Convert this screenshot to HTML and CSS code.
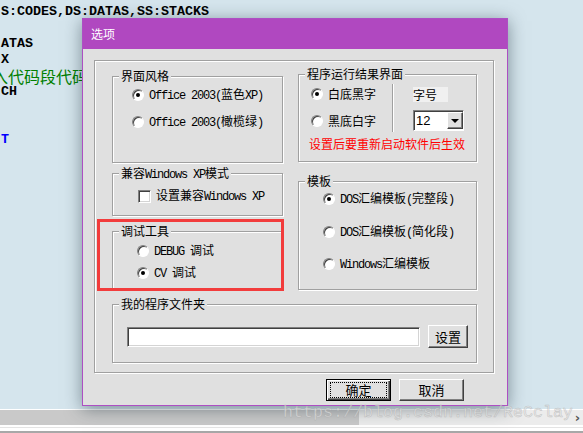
FILE: index.html
```html
<!DOCTYPE html>
<html lang="zh-CN">
<head>
  <meta charset="UTF-8">
  <title>选项</title>
  <link rel="stylesheet" href="styles.css">
</head>
<body>
  <div class="editor">
    <div class="code">
      <div class="line">S:CODES,DS:DATAS,SS:STACKS</div>
      <div class="line">&nbsp;</div>
      <div class="line">ATAS</div>
      <div class="line">X</div>
      <div class="line comment">入代码段代码</div>
      <div class="line">CH</div>
      <div class="line">&nbsp;</div>
      <div class="line">&nbsp;</div>
      <div class="line kw">T</div>
    </div>
  </div>
  <div class="statusbar">
    <div class="tabs"></div>
    <div class="tail"><span class="more">›</span></div>
  </div>

  <div class="dialog">
    <div class="titlebar">选项</div>
    <div class="dlg-body">
      <div class="frame">
        <div class="cols">
          <div class="col col-left">
            <div class="group g-style">
              <div class="gtitle">界面风格</div>
              <div class="opt"><span class="radio on"></span><span class="lbl"><span class="en">Office 2003(</span>蓝色<span class="en">XP)</span></span></div>
              <div class="opt"><span class="radio"></span><span class="lbl"><span class="en">Office 2003(</span>橄榄绿<span class="en">)</span></span></div>
            </div>
            <div class="group g-compat">
              <div class="gtitle">兼容<span class="en">Windows XP</span>模式</div>
              <div class="opt"><span class="check"></span><span class="lbl">设置兼容<span class="en">Windows XP</span></span></div>
            </div>
            <div class="group g-debug">
              <div class="gtitle">调试工具</div>
              <div class="opt"><span class="radio"></span><span class="lbl"><span class="en">DEBUG </span>调试</span></div>
              <div class="opt"><span class="radio on"></span><span class="lbl"><span class="en">CV </span>调试</span></div>
            </div>
          </div>

          <div class="col col-right">
            <div class="group g-run">
              <div class="gtitle">程序运行结果界面</div>
              <div class="run-top">
                <div class="run-radios">
                  <div class="opt"><span class="radio on"></span><span class="lbl">白底黑字</span></div>
                  <div class="opt"><span class="radio"></span><span class="lbl">黑底白字</span></div>
                </div>
                <div class="vsep"></div>
                <div class="font-col">
                  <div class="font-label">字号</div>
                  <div class="select">
                    <span class="select-val">12</span>
                    <span class="select-btn"><span class="tri"></span></span>
                  </div>
                </div>
              </div>
              <div class="warn">设置后要重新启动软件后生效</div>
            </div>
            <div class="group g-tpl">
              <div class="gtitle">模板</div>
              <div class="opt"><span class="radio on"></span><span class="lbl"><span class="en">DOS</span>汇编模板<span class="en">(</span>完整段<span class="en">)</span></span></div>
              <div class="opt"><span class="radio"></span><span class="lbl"><span class="en">DOS</span>汇编模板<span class="en">(</span>简化段<span class="en">)</span></span></div>
              <div class="opt"><span class="radio"></span><span class="lbl"><span class="en">Windows</span>汇编模板</span></div>
            </div>
          </div>
        </div>

        <div class="group g-folder">
          <div class="gtitle">我的程序文件夹</div>
          <div class="folder-row">
            <div class="textbox"></div>
            <div class="btn btn-small">设置</div>
          </div>
        </div>
      </div>

      <div class="actions">
        <div class="btn btn-default"><span class="focus">确定</span></div>
        <div class="btn">取消</div>
      </div>
    </div>
  </div>

  <div class="annot"></div>
  <div class="mark">https://blog.csdn.net/ReCclay</div>
</body>
</html>
```

FILE: styles.css
```css
html, body {
  margin: 0;
  padding: 0;
}

body {
  width: 583px;
  height: 433px;
  overflow: hidden;
  position: relative;
  display: flex;
  flex-direction: column;
  background: #d5e5ed;
  font-family: "Noto Sans CJK SC", sans-serif;
}

/* editor behind the dialog */
.editor {
  flex: 1;
  min-height: 0;
  overflow: hidden;
}

.code {
  padding: 4px 0 0 1px;
  font-family: "Liberation Mono", "Noto Sans CJK SC", monospace;
  font-weight: bold;
  font-size: 13.33px;
  line-height: 16px;
  color: #000;
}

.line {
  height: 16px;
  white-space: nowrap;
}

.code .comment {
  font-family: "Noto Sans CJK SC", sans-serif;
  font-weight: normal;
  font-size: 16px;
  line-height: 16px;
  color: #008000;
  margin-left: -9px;
}

.code .kw { color: #0000ff; }

.statusbar {
  flex: none;
  height: 24px;
  display: flex;
  align-items: flex-start;
  background: linear-gradient(to bottom, #fff 0 1px, #ececec 1px 16px, #fff 16px 18px, #e4e4e4 18px 19px, #fff 19px 22px, #a8a8a8 22px 24px);
}

.tabs {
  width: 359px;
  height: 15px;
  margin-top: 1px;
  background: #c9c9c9;
}

.tail {
  flex: 1;
  height: 15px;
  margin-top: 1px;
  display: flex;
  justify-content: flex-end;
  align-items: center;
  padding-right: 3px;
}

.more {
  font-family: "DejaVu Sans", sans-serif;
  font-weight: bold;
  font-size: 13px;
  line-height: 15px;
  color: #555;
}

/* dialog window */
.dialog {
  position: absolute;
  left: 82px;
  top: 18px;
  width: 426px;
  height: 388px;
  box-sizing: border-box;
  border: 1px solid #ad4fc3;
  background: #e0e0e0;
  box-shadow: 0 3px 16px rgba(30, 50, 60, 0.5);
  font-size: 12px;
  line-height: 14px;
  color: #000;
}

.titlebar {
  height: 30px;
  line-height: 30px;
  padding-left: 8px;
  background: #b048c0;
  color: #fff;
}

.dlg-body {
  padding: 11px 0 0 11px;
}

.en {
  font-family: "Liberation Mono", monospace;
  letter-spacing: -1.2px;
}

.frame {
  width: 400px;
  height: 313px;
  box-sizing: border-box;
  border: 1px solid #a0a0a0;
  box-shadow: 1px 1px 0 #fff, inset 1px 1px 0 #fff;
  padding: 0 16px 0 17px;
}

.cols {
  display: flex;
  gap: 15px;
}

.col {
  display: flex;
  flex-direction: column;
}

.col-left { width: 171px; padding-top: 15px; }
.col-right { width: 179px; padding-top: 13px; }

.group {
  display: flex;
  flex-direction: column;
  box-sizing: border-box;
  border: 1px solid #a0a0a0;
  box-shadow: 1px 1px 0 #fff, inset 1px 1px 0 #fff;
}

.gtitle {
  align-self: flex-start;
  height: 14px;
  line-height: 14px;
  margin: -8px 0 -6px 6px;
  padding: 0 2px;
  background: #e0e0e0;
  white-space: nowrap;
}

.opt {
  display: flex;
  align-items: center;
  height: 20px;
  white-space: nowrap;
}

.lbl {
  white-space: pre;
}

.radio {
  width: 12px;
  height: 12px;
  box-sizing: border-box;
  margin-right: 5px;
  border-radius: 50%;
  border: 1px solid;
  border-color: #808080 #fff #fff #808080;
  box-shadow: inset 1px 1px 0 #404040;
  background: #fff;
  display: flex;
  align-items: center;
  justify-content: center;
}

.radio.on::after {
  content: "";
  width: 4px;
  height: 4px;
  border-radius: 50%;
  background: #000;
}

.check {
  width: 13px;
  height: 13px;
  box-sizing: border-box;
  margin-right: 5px;
  border: 1px solid;
  border-color: #808080 #fff #fff #808080;
  box-shadow: inset 1px 1px 0 #404040, inset -1px -1px 0 #d4d4d4;
  background: #fff;
}

/* left groups */
.g-style { height: 87px; }
.g-style .opt { margin: 7px 0 0 19px; }
.g-style .opt:nth-child(2) { margin-top: 8px; }

.g-compat { height: 43px; margin-top: 10px; }
.g-compat .opt { margin: 12px 0 0 25px; }

.g-debug { height: 59px; margin-top: 15px; }
.g-debug .opt { margin: 2px 0 0 24px; }
.g-debug .opt:nth-child(2) { margin-top: 9px; }

/* right groups */
.g-run { height: 88px; }

.run-top {
  display: flex;
  margin-top: 9px;
}

.run-radios {
  width: 81px;
  margin-left: 12px;
}

.run-radios .opt + .opt { margin-top: 7px; }

.vsep {
  width: 0;
  height: 48px;
  border-left: 1px solid #a0a0a0;
  border-right: 1px solid #fff;
}

.font-col {
  margin-left: 19px;
}

.font-label {
  width: 35px;
  height: 15px;
  line-height: 15px;
  margin-top: 3px;
  background: #f0f0f0;
}

.select {
  display: flex;
  width: 51px;
  height: 21px;
  margin-top: 8px;
  box-sizing: border-box;
  border: 1px solid;
  border-color: #808080 #fff #fff #808080;
  box-shadow: inset 1px 1px 0 #404040;
  background: #fff;
}

.select-val {
  flex: 1;
  padding: 1px 0 0 2px;
  font-family: "Liberation Sans", sans-serif;
  font-size: 13px;
  line-height: 17px;
}

.select-btn {
  width: 16px;
  margin: 1px 0 1px 0;
  box-sizing: border-box;
  border: 1px solid;
  border-color: #fff #404040 #404040 #fff;
  box-shadow: inset -1px -1px 0 #808080;
  background: #e0e0e0;
  display: flex;
  align-items: center;
  justify-content: center;
}

.tri {
  width: 0;
  height: 0;
  border-left: 4px solid transparent;
  border-right: 4px solid transparent;
  border-top: 4px solid #000;
}

.warn {
  margin: 4px 0 0 10px;
  line-height: 16px;
  color: #ff0000;
  white-space: nowrap;
}

.g-tpl { height: 109px; margin-top: 19px; }
.g-tpl .opt { margin: 12px 0 0 24px; }
.g-tpl .opt:nth-child(2) { margin-top: 7px; }
.g-tpl .opt:nth-child(3) { margin-top: 13px; }

/* folder group */
.g-folder {
  width: 365px;
  height: 59px;
  margin-top: 14px;
}

.folder-row {
  display: flex;
  align-items: center;
  margin: 20px 0 0 14px;
}

.textbox {
  width: 293px;
  height: 20px;
  box-sizing: border-box;
  border: 1px solid;
  border-color: #808080 #fff #fff #808080;
  box-shadow: inset 1px 1px 0 #404040, inset -1px -1px 0 #d4d4d4;
  background: #fff;
}

.btn {
  width: 65px;
  height: 22px;
  box-sizing: border-box;
  border: 1px solid;
  border-color: #fff #404040 #404040 #fff;
  box-shadow: inset -1px -1px 0 #808080;
  background: #e0e0e0;
  display: flex;
  align-items: center;
  justify-content: center;
  font-size: 13px;
}

.btn-small {
  width: 40px;
  height: 23px;
  margin-left: 8px;
}

.actions {
  width: 400px;
  box-sizing: border-box;
  display: flex;
  justify-content: flex-end;
  gap: 8px;
  margin-top: 6px;
  padding-right: 30px;
}

.btn-default {
  border: 1px solid #000;
  box-shadow: inset 1px 1px 0 #fff, inset -1px -1px 0 #404040, inset -2px -2px 0 #808080;
}

.focus {
  width: 55px;
  height: 14px;
  line-height: 14px;
  text-align: center;
  border: 1px dotted #000;
}

/* screenshot overlays */
.annot {
  position: absolute;
  left: 97px;
  top: 219px;
  width: 187px;
  height: 72px;
  box-sizing: border-box;
  border: 3px solid #f23c3c;
}

.mark {
  position: absolute;
  left: 283px;
  top: 403px;
  font-family: "Liberation Mono", monospace;
  font-size: 16.67px;
  line-height: 20px;
  color: rgba(235, 235, 235, 0.6);
  -webkit-text-stroke: 0.6px rgba(150, 150, 150, 0.45);
  white-space: nowrap;
}
```
